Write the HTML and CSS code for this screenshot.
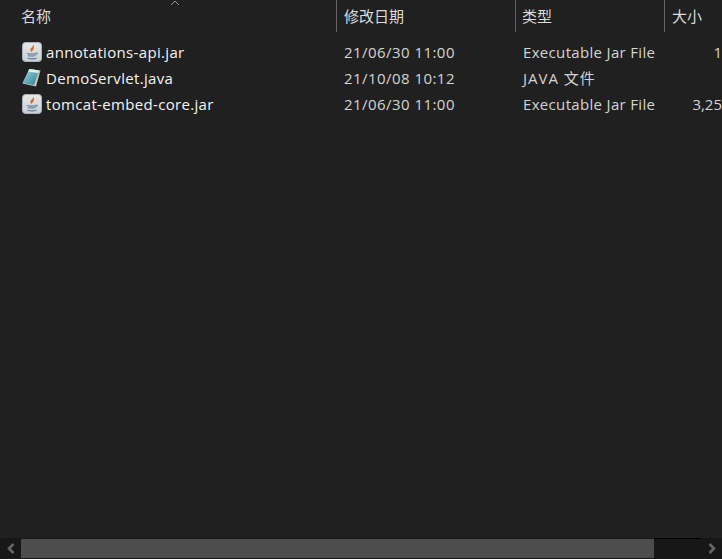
FILE: index.html
```html
<!DOCTYPE html>
<html lang="zh-CN">
<head>
    <meta charset="UTF-8">
    <title>文件列表</title>
    <link rel="stylesheet" href="styles.css">
</head>
<body>
    <div class="explorer">
        <div class="header">
            <div class="col col-name">
                <svg class="sort-arrow" viewBox="0 0 10 6"><path d="M1 5l4-4 4 4" fill="none" stroke="#9a9a9a"/></svg>
                名称
            </div>
            <div class="col col-date">修改日期</div>
            <div class="col col-type">类型</div>
            <div class="col col-size">大小</div>
        </div>

        <div class="rows">
            <div class="row">
                <div class="cell cell-name">
                    <svg class="file-icon" viewBox="0 0 20 20">
                        <use href="#jar-icon"/>
                    </svg>
                    annotations-api.jar
                </div>
                <div class="cell cell-date">21/06/30 11:00</div>
                <div class="cell cell-type">Executable Jar File</div>
                <div class="cell cell-size">1</div>
            </div>
            <div class="row">
                <div class="cell cell-name">
                    <svg class="file-icon" viewBox="0 0 20 20">
                        <path d="M7.500 1l11 1.500-4.500 16-13.500-3z" fill="#c9c6ae"/>
                        <path d="M7.500 1l9.500 1.500-5 14.500-11.500-2z" fill="url(#note-fill)"/>
                        <path d="M7.500 1l9.500 1.500-1 2.500L6 3.500z" fill="#dcf1f3"/>
                    </svg>
                    DemoServlet.java
                </div>
                <div class="cell cell-date">21/10/08 10:12</div>
                <div class="cell cell-type cell-type-cn">JAVA 文件</div>
                <div class="cell cell-size"></div>
            </div>
            <div class="row">
                <div class="cell cell-name">
                    <svg class="file-icon" viewBox="0 0 20 20">
                        <use href="#jar-icon"/>
                    </svg>
                    tomcat-embed-core.jar
                </div>
                <div class="cell cell-date">21/06/30 11:00</div>
                <div class="cell cell-type">Executable Jar File</div>
                <div class="cell cell-size">3,25</div>
            </div>
        </div>

        <div class="scrollbar">
            <div class="scroll-btn">
                <svg viewBox="0 0 8 11"><path d="M6.500 1L2 5.500 6.500 10" fill="none" stroke="#666" stroke-width="2.600"/></svg>
            </div>
            <div class="scroll-track">
                <div class="scroll-thumb"></div>
                <div class="scroll-rest"></div>
            </div>
            <div class="scroll-btn">
                <svg viewBox="0 0 8 11"><path d="M1.500 1L6 5.500 1.500 10" fill="none" stroke="#666" stroke-width="2.600"/></svg>
            </div>
        </div>
    </div>

    <!-- shared icon parts -->
    <svg class="icon-defs" width="0" height="0">
        <defs>
            <linearGradient id="note-fill" x1="0" y1="0" x2="1" y2="1">
                <stop offset="0" stop-color="#a9dfe6"/>
                <stop offset="1" stop-color="#26798f"/>
            </linearGradient>
            <linearGradient id="jar-fill" x1="0" y1="0" x2="0" y2="1">
                <stop offset="0" stop-color="#e8e8e6"/>
                <stop offset="1" stop-color="#c6ced6"/>
            </linearGradient>
            <g id="jar-icon">
                <rect x="0.500" y="0.500" width="19" height="19" rx="3" fill="url(#jar-fill)" stroke="#a8b2bc"/>
                <path d="M11 2.500c1 2.500-3.500 3.500-2.500 6 .3.700.8 1.300 1.200 1.700-.3-1.700 3.300-2.700 1.800-4.700.9-.6.500-2-.5-3z" fill="#e0642a"/>
                <path d="M5 11.500c2 .8 7 .8 9 0M6 13.500c2 .6 5 .6 7 0M5.500 16c2.500 1 6.500 1 9 0" fill="none" stroke="#5a7a94" stroke-width="1.100"/>
                <path d="M14 11c1.500-.5 2 1.500-.5 2" fill="none" stroke="#5a7a94"/>
            </g>
        </defs>
    </svg>
</body>
</html>
```

FILE: styles.css
```css
* {
    margin: 0;
    padding: 0;
    box-sizing: border-box;
}

body {
    font-family: "Open Sans", "Noto Sans CJK SC", sans-serif;
    font-size: 15px;
    background: #202020;
    color: #e6e6e6;
    height: 100vh;
    width: 100vw;
    overflow: hidden;
}

.explorer {
    height: 100%;
    display: flex;
    flex-direction: column;
}

.header,
.row {
    display: grid;
    grid-template-columns: 337px 179px 149px 57px;
}

.header {
    height: 32px;
}

.col {
    padding-top: 5px;
    border-right: 1px solid #636363;
    color: #dcdcdc;
    line-height: 22px;
    padding-left: 7px;
    position: relative;
}

.col-name {
    padding-left: 21px;
}

.col-type {
    padding-left: 6px;
}

.col-size {
    border-right: none;
}

.sort-arrow {
    position: absolute;
    left: 170px;
    top: 0;
    width: 10px;
    height: 6px;
}

.rows {
    flex: 1;
    padding-top: 7px;
}

.row {
    height: 26px;
    align-items: center;
}

.cell {
    white-space: nowrap;
    padding-left: 7px;
    color: #d4d4d4;
    letter-spacing: 0.33px;
    line-height: 20px;
}

.cell-name {
    padding-left: 22px;
    display: flex;
    align-items: center;
    gap: 4px;
    color: #f4f4f4;
}

.cell-date {
    letter-spacing: 0.45px;
}

.cell-type-cn {
    letter-spacing: 1px;
}

.cell-size {
    text-align: right;
    padding-left: 0;
    letter-spacing: 0;
}

.file-icon {
    width: 20px;
    height: 20px;
    flex-shrink: 0;
}

.icon-defs {
    position: absolute;
}

.scrollbar {
    height: 21px;
    display: flex;
    background: #171717;
}

.scroll-btn {
    width: 21px;
    display: flex;
    align-items: center;
    justify-content: center;
}

.scroll-btn svg {
    width: 8px;
    height: 11px;
}

.scroll-track {
    flex: 1;
    display: flex;
}

.scroll-thumb {
    width: 633px;
    margin: 1px 0;
    background: #4d4d4d;
}

.scroll-rest {
    flex: 1;
    border-top: 1px solid #000;
}
```
